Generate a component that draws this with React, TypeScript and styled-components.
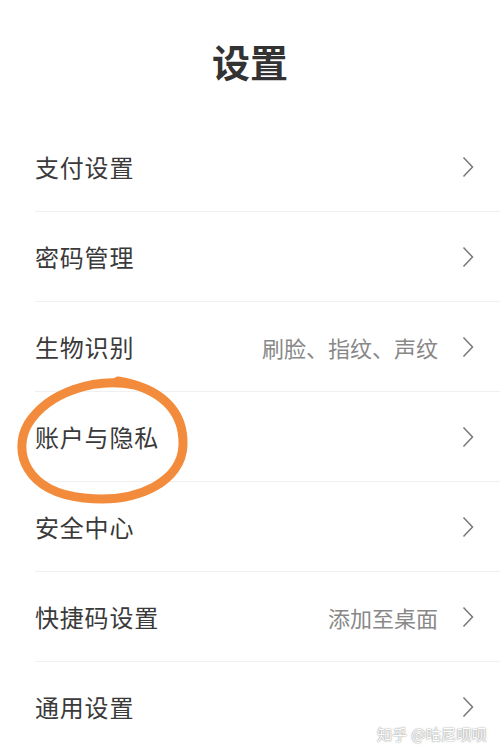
import React, { FC } from 'react';
import styled, { createGlobalStyle } from 'styled-components';

const GlobalStyle = createGlobalStyle`
  html, body {
    margin: 0;
    padding: 0;
    background: #ffffff;
  }
  body {
    font-family: "Noto Sans CJK SC", "Noto Sans", sans-serif;
  }
`;

type Item = { label: string; value?: string };

const items: Item[] = [
  { label: '支付设置' },
  { label: '密码管理' },
  { label: '生物识别', value: '刷脸、指纹、声纹' },
  { label: '账户与隐私' },
  { label: '安全中心' },
  { label: '快捷码设置', value: '添加至桌面' },
  { label: '通用设置' },
];

const Chevron: FC = () => (
  <ChevronSvg width="12" height="22" viewBox="0 0 12 22">
    <path d="M1.5 1.5 L10.5 11 L1.5 20.5" fill="none" stroke="#777" strokeWidth="1.5" strokeLinejoin="miter" />
  </ChevronSvg>
);

const App: FC = () => {
  return (
    <Page>
      <GlobalStyle />
      <Header>设置</Header>
      <List>
        {items.map((it) => (
          <Row key={it.label}>
            <Label>{it.label}</Label>
            <Right>
              {it.value && <Value>{it.value}</Value>}
              <Chevron />
            </Right>
          </Row>
        ))}
      </List>
      <Circle width="500" height="750" viewBox="0 0 500 750">
        <path
          d="M135 385 C 95 377, 48 392, 28 424 C 12 452, 26 492, 84 498 C 140 504, 182 480, 183 445 C 184 410, 160 388, 118 381"
          fill="none"
          stroke="#f28b3b"
          strokeWidth="9"
          strokeLinecap="round"
        />
      </Circle>
      <Watermark>知乎 @咕尼呗呗</Watermark>
    </Page>
  );
};

const Page = styled.div`
  position: relative;
  width: 500px;
  height: 750px;
  overflow: hidden;
  background: #fff;
`;

const Header = styled.div`
  height: 122px;
  display: flex;
  align-items: center;
  justify-content: center;
  font-size: 38px;
  font-weight: 700;
  color: #333;
  padding-bottom: 2px;
  box-sizing: border-box;
`;

const List = styled.div`
  display: flex;
  flex-direction: column;
  padding-left: 35px;
`;

const Row = styled.div`
  height: 90px;
  display: flex;
  align-items: center;
  justify-content: space-between;
  padding-right: 26px;
  border-bottom: 1px solid #f0f0f0;
  box-sizing: border-box;
`;

const Label = styled.span`
  font-size: 24px;
  color: #3a3a3a;
  letter-spacing: 0.8px;
`;

const Right = styled.div`
  display: flex;
  align-items: center;
  gap: 24px;
`;

const Value = styled.span`
  font-size: 22px;
  color: #888;
`;

const ChevronSvg = styled.svg`
  display: block;
`;

const Circle = styled.svg`
  position: absolute;
  left: 0;
  top: 0;
  pointer-events: none;
`;

const Watermark = styled.div`
  position: absolute;
  right: 13px;
  bottom: 6px;
  font-size: 15px;
  letter-spacing: 0.3px;
  color: #fff;
  text-shadow: 0 0 1px #888, 0 0 2px #aaa;
`;

export default App;
